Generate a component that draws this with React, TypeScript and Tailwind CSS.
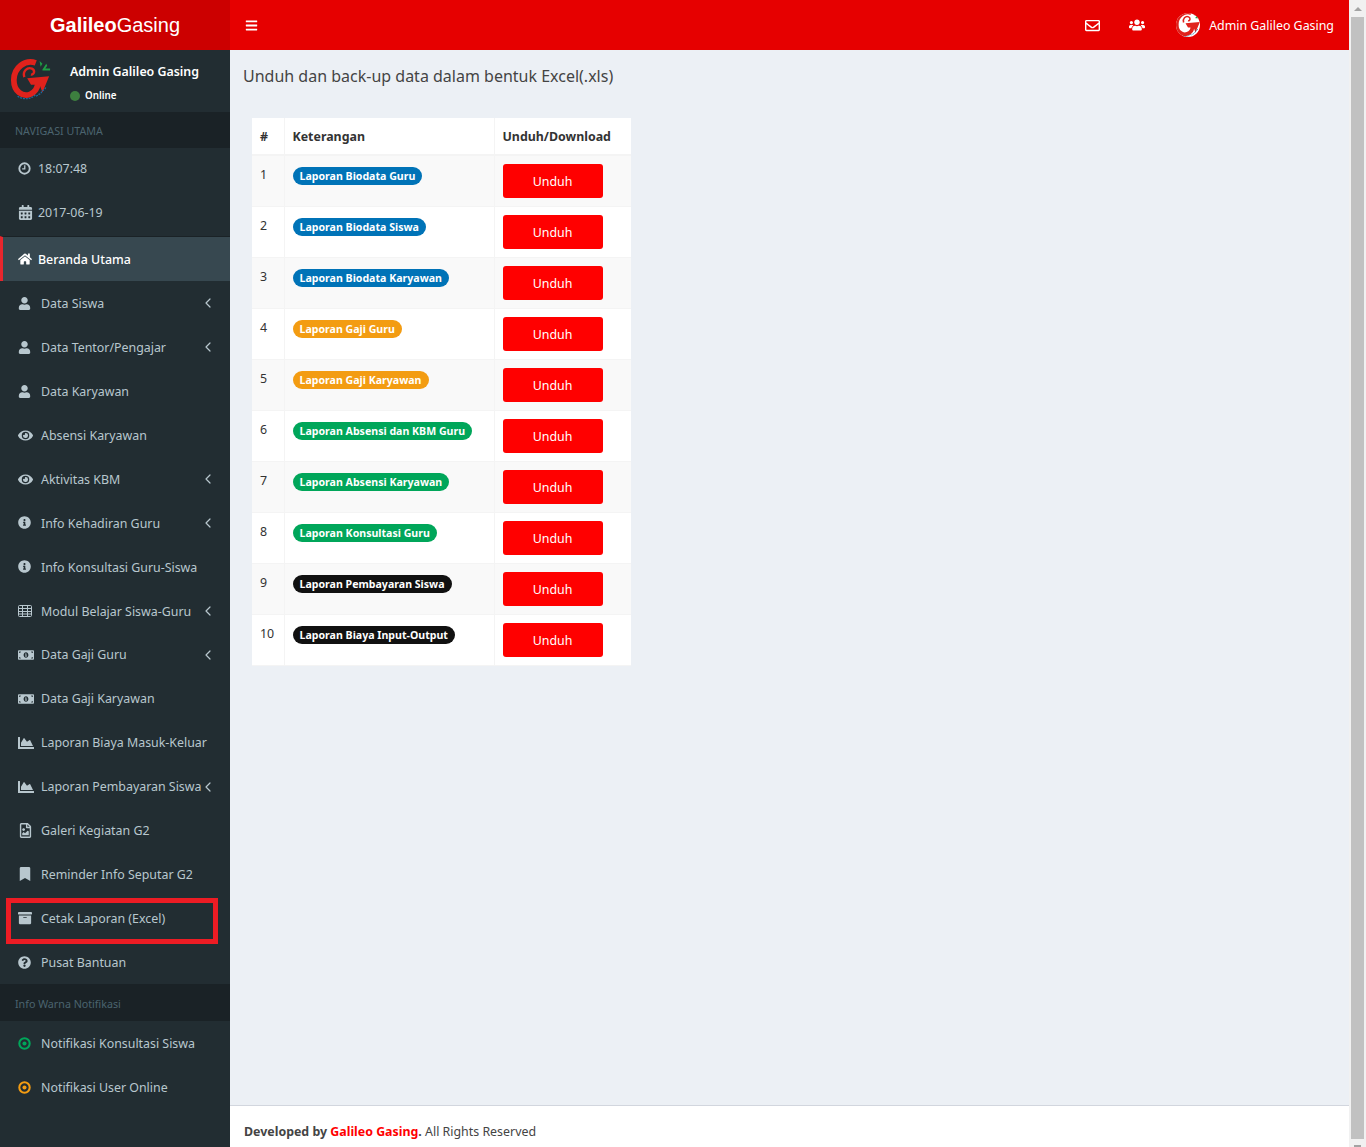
import type { ReactNode } from "react";
import { ChevronLeft } from "lucide-react";
import {
  FaArchive,
  FaBars,
  FaBookmark,
  FaCalendarAlt,
  FaChartArea,
  FaEye,
  FaHome,
  FaInfoCircle,
  FaMoneyBillAlt,
  FaQuestionCircle,
  FaRegEnvelope,
  FaRegFileImage,
  FaUser,
  FaUsers,
} from "react-icons/fa";

const fontBody = "font-['Noto_Sans','Open_Sans',sans-serif]";

function GridIcon() {
  return (
    <svg viewBox="0 0 14 12" className="h-[12px] w-[14px]" fill="none" stroke="currentColor" strokeWidth="1">
      <rect x="0.5" y="0.5" width="13" height="11" rx="1" />
      <path d="M0.5 3.5h13M0.5 6.5h13M0.5 9h13M4.5 0.5v11M9.5 0.5v11" />
    </svg>
  );
}

const menu = [
  { label: "Data Siswa", icon: <FaUser size={13} />, arrow: true },
  { label: "Data Tentor/Pengajar", icon: <FaUser size={13} />, arrow: true },
  { label: "Data Karyawan", icon: <FaUser size={13} /> },
  { label: "Absensi Karyawan", icon: <FaEye size={15} /> },
  { label: "Aktivitas KBM", icon: <FaEye size={15} />, arrow: true },
  { label: "Info Kehadiran Guru", icon: <FaInfoCircle size={13} />, arrow: true },
  { label: "Info Konsultasi Guru-Siswa", icon: <FaInfoCircle size={13} /> },
  { label: "Modul Belajar Siswa-Guru", icon: <GridIcon />, arrow: true },
  { label: "Data Gaji Guru", icon: <FaMoneyBillAlt size={16} />, arrow: true },
  { label: "Data Gaji Karyawan", icon: <FaMoneyBillAlt size={16} /> },
  { label: "Laporan Biaya Masuk-Keluar", icon: <FaChartArea size={16} /> },
  { label: "Laporan Pembayaran Siswa", icon: <FaChartArea size={16} />, arrow: true },
  { label: "Galeri Kegiatan G2", icon: <FaRegFileImage size={15} /> },
  { label: "Reminder Info Seputar G2", icon: <FaBookmark size={14} /> },
  { label: "Cetak Laporan (Excel)", icon: <FaArchive size={14} />, marked: true },
  { label: "Pusat Bantuan", icon: <FaQuestionCircle size={13} /> },
];

const rows = [
  { label: "Laporan Biodata Guru", color: "bg-[#0073b7]" },
  { label: "Laporan Biodata Siswa", color: "bg-[#0073b7]" },
  { label: "Laporan Biodata Karyawan", color: "bg-[#0073b7]" },
  { label: "Laporan Gaji Guru", color: "bg-[#f39c12]" },
  { label: "Laporan Gaji Karyawan", color: "bg-[#f39c12]" },
  { label: "Laporan Absensi dan KBM Guru", color: "bg-[#00a65a]" },
  { label: "Laporan Absensi Karyawan", color: "bg-[#00a65a]" },
  { label: "Laporan Konsultasi Guru", color: "bg-[#00a65a]" },
  { label: "Laporan Pembayaran Siswa", color: "bg-[#111111]" },
  { label: "Laporan Biaya Input-Output", color: "bg-[#111111]" },
];

function Logo({ className }: { className: string }) {
  return (
    <svg viewBox="0 0 44 48" className={className}>
      <path
        d="M27 5C16 1 4 10 4 23c0 12 9 18 17 15 5-2 8-7 8-11"
        fill="none"
        stroke="#e0221c"
        strokeWidth="6"
      />
      <path d="M18 21l23-2-7 17-3-8-9 0z" fill="#e0221c" />
      <path
        d="M15 20c-2-6 3-11 8-9 4 2 2 7-1 6"
        fill="none"
        stroke="#e0221c"
        strokeWidth="2.5"
      />
      <path d="M31 3l3 3-2 3M34 12l4-6 1 2-2 3 5 0 0 2h-8z" fill="#1f9e45" />
      <path
        d="M8 40c6 4 14 3 18-1 1 2 3 0 4-1 2 0 3-2 4-4 1 0 3-2 4-4"
        fill="none"
        stroke="#1c6ea4"
        strokeWidth="1.2"
        strokeDasharray="2 1"
      />
    </svg>
  );
}

function ClockIcon() {
  return (
    <svg viewBox="0 0 14 14" className="h-[13px] w-[13px]" fill="none" stroke="currentColor">
      <circle cx="7" cy="7" r="5.6" strokeWidth="2" />
      <path d="M7.3 3.5v4H4.5" strokeWidth="1.4" />
    </svg>
  );
}

function DotIcon({ className }: { className: string }) {
  return (
    <svg viewBox="0 0 14 14" className={`h-[13px] w-[13px] ${className}`} fill="none" stroke="currentColor">
      <circle cx="7" cy="7" r="5.6" strokeWidth="2.2" />
      <circle cx="7" cy="7" r="2.2" fill="currentColor" stroke="none" />
    </svg>
  );
}

function SectionHeader({ children, tall }: { children: ReactNode; tall?: boolean }) {
  return (
    <div className={`flex ${tall ? "h-[37px]" : "h-[36px]"} items-center bg-[#1a2226] pl-[15px] pt-[2px] text-[10.7px] text-[#4b646f]`}>
      {children}
    </div>
  );
}

function SideRow({
  icon,
  label,
  tight,
}: {
  icon: ReactNode;
  label: string;
  tight?: boolean;
}) {
  return (
    <div className={`flex h-[44px] items-center pl-[18px] text-[#b8c7ce] ${tight ? "pb-[3px]" : ""}`}>
      <span className={`flex ${tight ? "w-[20px]" : "w-[23px]"} shrink-0 items-center`}>{icon}</span>
      <span className="pt-[2px]">{label}</span>
    </div>
  );
}

function Sidebar() {
  return (
    <aside className="flex w-[230px] shrink-0 flex-col bg-[#222d32]">
      <div className="flex h-[50px] items-center justify-center bg-[#cc0000] font-['Liberation_Sans',sans-serif] text-[20px] text-white">
        <b>Galileo</b>
        <span>Gasing</span>
      </div>
      <div className="flex h-[62px] items-start">
        <Logo className="ml-[10px] mt-[8px] h-[46px] w-[42px] shrink-0" />
        <div className="ml-[18px] mt-[13px] text-white">
          <p className="text-[12.4px] font-semibold leading-[18px]">Admin Galileo Gasing</p>
          <p className="mt-[8px] flex items-center gap-[5px] text-[9.8px] font-semibold leading-[14px]">
            <span className="h-[10px] w-[10px] rounded-full bg-[#3d7f3f]" />
            Online
          </p>
        </div>
      </div>
      <SectionHeader>NAVIGASI UTAMA</SectionHeader>
      <SideRow tight icon={<ClockIcon />} label="18:07:48" />
      <SideRow tight icon={<FaCalendarAlt size={15} />} label="2017-06-19" />
      <div className="flex h-[45.3px] items-center border-t border-t-[#1a2226] border-l-[3px] border-l-[#e8262d] bg-[#374850] pl-[15px] font-medium text-white">
        <span className="flex w-[20px] shrink-0 items-center">
          <FaHome size={14} />
        </span>
        <span className="pt-[2px]">Beranda Utama</span>
      </div>
      {menu.map((item) => (
        <div
          key={item.label}
          className="relative flex h-[43.94px] items-center pl-[18px] text-[#b8c7ce]"
        >
          <span className="flex w-[23px] shrink-0 items-center">{item.icon}</span>
          <span className="pt-[2px]">{item.label}</span>
          {item.arrow && <ChevronLeft size={16} strokeWidth={1.8} className="absolute left-[200px]" />}
          {item.marked && (
            <span className="absolute left-[6px] top-[2px] h-[46px] w-[212px] border-[5px] border-[#ed1c24]" />
          )}
        </div>
      ))}
      <SectionHeader tall>Info Warna Notifikasi</SectionHeader>
      <SideRow icon={<DotIcon className="text-[#00a65a]" />} label="Notifikasi Konsultasi Siswa" />
      <SideRow icon={<DotIcon className="text-[#f39c12]" />} label="Notifikasi User Online" />
    </aside>
  );
}

function Topbar() {
  return (
    <header className="flex h-[50px] shrink-0 items-center bg-[#e60000] pl-[15px] pr-[15px] text-white">
      <FaBars size={13} />
      <div className="ml-auto flex items-center">
        <FaRegEnvelope size={15} />
        <FaUsers size={16} className="ml-[29px]" />
        <span className="ml-[31px] flex h-[24px] w-[24px] items-center justify-center overflow-hidden rounded-full bg-white">
          <Logo className="h-[30px] w-[28px] shrink-0" />
        </span>
        <span className="ml-[9px] pt-[2px]">Admin Galileo Gasing</span>
      </div>
    </header>
  );
}

function ReportTable() {
  return (
    <table className="ml-[9px] mt-[31px] w-[379px] table-fixed border-collapse bg-white text-[#333333]">
      <thead>
        <tr className="h-[37px] border-b-2 border-[#f4f4f4] text-left">
          <th className="w-[32px] border-r border-[#f4f4f4] px-[8px] pt-[2px] font-bold">#</th>
          <th className="w-[210px] border-r border-[#f4f4f4] px-[8px] pt-[2px] font-bold">Keterangan</th>
          <th className="px-[8px] pt-[2px] font-bold">Unduh/Download</th>
        </tr>
      </thead>
      <tbody>
        {rows.map((row, i) => (
          <tr key={row.label} className={`border-b border-[#f4f4f4] ${i % 2 === 0 ? "bg-[#f9f9f9]" : "bg-white"}`}>
            <td className="border-r border-[#f4f4f4] p-[8px] pt-[9px] align-top leading-[20px]">{i + 1}</td>
            <td className="border-r border-[#f4f4f4] p-[8px] pt-[11px] align-top leading-[0]">
              <span className={`inline-block h-[18px] whitespace-nowrap rounded-[10px] px-[7px] text-[10.6px] font-bold leading-[18px] text-white ${row.color}`}>
                {row.label}
              </span>
            </td>
            <td className="p-[8px] align-top leading-[0]">
              <button className="h-[34px] w-[100px] rounded-[3px] bg-[#ff0000] pt-[2px] leading-[32px] text-white">
                Unduh
              </button>
            </td>
          </tr>
        ))}
      </tbody>
    </table>
  );
}

function Scrollbar() {
  return (
    <div className="flex w-[17px] shrink-0 flex-col items-center bg-[#f1f1f1]">
      <div className="flex h-[17px] items-center justify-center">
        <span className="h-0 w-0 border-x-[4px] border-b-[4px] border-x-transparent border-b-[#a3a3a3]" />
      </div>
      <div className="w-[13px] flex-1 bg-[#c1c1c1]" />
      <div className="flex h-[8px] items-end justify-center">
        <span className="h-[2px] w-[7px] bg-[#a3a3a3]" />
      </div>
    </div>
  );
}

export default function App() {
  return (
    <div className={`flex h-[1147px] w-full overflow-hidden bg-[#ecf0f5] text-[12.4px] ${fontBody}`}>
      <Sidebar />
      <div className="flex min-w-0 flex-1 flex-col">
        <Topbar />
        <main className="flex-1 pl-[13px] pt-[15px]">
          <h1 className="text-[16px] leading-[22px] text-[#444444]">
            Unduh dan back-up data dalam bentuk Excel(.xls)
          </h1>
          <ReportTable />
        </main>
        <footer className="flex h-[42px] items-center border-t border-[#d2d6de] bg-white pl-[14px] pt-[11px] text-[#444444]">
          <b>Developed by&nbsp;</b>
          <b className="text-[#ff0000]">Galileo Gasing</b>
          <b>.</b>
          <span>&nbsp;All Rights Reserved</span>
        </footer>
      </div>
      <Scrollbar />
    </div>
  );
}
